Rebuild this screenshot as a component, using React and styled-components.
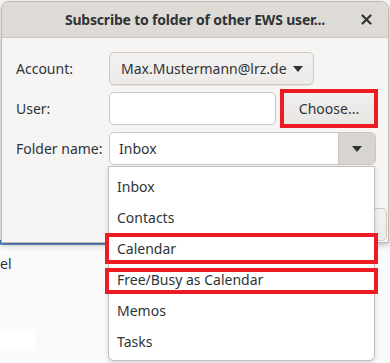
import styled, { createGlobalStyle } from "styled-components";

const GlobalStyle = createGlobalStyle`
  html, body {
    margin: 0;
    padding: 0;
    background: #fafafa;
  }
  body {
    font-family: "Noto Sans", "Open Sans", sans-serif;
    color: #2e3436;
  }
`;

const Screen = styled.div`
  position: relative;
  width: 390px;
  height: 363px;
  overflow: hidden;
  background: #fafafa;
`;

// what shows of the main window behind the dialog
const Backdrop = styled.div`
  display: flex;
  flex-direction: column;
  padding-top: 240px;
`;

const BlueBand = styled.div`
  width: 120px;
  height: 5px;
  background: linear-gradient(#2a5fa8, #6d93c6);
`;

const BackLabel = styled.div`
  margin-top: 10px;
  font-size: 14px;
  color: #2e3436;
  line-height: 18px;
`;

const BackField = styled.div`
  margin-top: 56px;
  width: 36px;
  height: 22px;
  background: #ffffff;
`;

const Dialog = styled.div`
  position: absolute;
  left: 1px;
  top: 1px;
  width: 386px;
  height: 240px;
  display: flex;
  flex-direction: column;
  background: #f6f5f4;
  border: 1px solid #bdb8b3;
  border-radius: 8px 8px 0 0;
  box-shadow: 0 2px 6px rgba(0, 0, 0, 0.25);
`;

const TitleBar = styled.div`
  position: relative;
  height: 35px;
  display: flex;
  align-items: center;
  justify-content: center;
  background: #dedbd7;
  border-bottom: 1px solid #cfc9c4;
  border-radius: 7px 7px 0 0;
`;

const Title = styled.span`
  font-weight: 700;
  font-size: 14px;
  color: #2e3436;
  letter-spacing: -0.2px;
`;

const CloseButton = styled.span`
  position: absolute;
  right: 14px;
  top: 9px;
  width: 16px;
  height: 16px;
  display: flex;
  align-items: center;
  justify-content: center;
`;

const Form = styled.div`
  display: grid;
  grid-template-columns: 93px 1fr;
  row-gap: 7px;
  padding: 14px 10px 0 14px;
  align-items: center;
`;

const Label = styled.label`
  font-size: 14px;
  color: #2e3436;
`;

const FieldRow = styled.div`
  display: flex;
  align-items: center;
  height: 33px;
`;

const ComboButton = styled.div`
  height: 31px;
  display: inline-flex;
  align-items: center;
  gap: 6px;
  padding: 0 10px 0 11px;
  border: 1px solid #cdc7c2;
  border-radius: 5px;
  background: linear-gradient(#f4f2f1, #edebe9);
  box-shadow: 0 1px 0 rgba(0, 0, 0, 0.07);
  font-size: 14px;
  color: #2e3436;
`;

const Entry = styled.div`
  width: 165px;
  height: 31px;
  border: 1px solid #cdc7c2;
  border-radius: 5px;
  background: #ffffff;
`;

const ChooseButton = styled.button`
  width: 98px;
  height: 39px;
  margin: -3px 0 -3px 4px;
  border: 4px solid #ed1c24;
  background: linear-gradient(#f1efee, #e8e6e3);
  font-family: "Noto Sans", "Open Sans", sans-serif;
  font-size: 14px;
  color: #2e3436;
  padding: 0;
`;

const FolderCombo = styled.div`
  width: 265px;
  height: 31px;
  display: flex;
  border: 1px solid #cdc7c2;
  border-radius: 5px;
  overflow: hidden;
  background: #ffffff;
`;

const FolderText = styled.div`
  flex: 1;
  display: flex;
  align-items: center;
  padding-left: 9px;
  font-size: 14px;
  color: #2e3436;
`;

const FolderArrow = styled.div`
  width: 36px;
  display: flex;
  align-items: center;
  justify-content: center;
  background: #d8d4d0;
  border-left: 1px solid #cdc7c2;
`;

const ButtonBar = styled.div`
  margin-top: auto;
  display: flex;
  justify-content: flex-end;
  padding: 0 1px 1px 0;
`;

const OkButton = styled.div`
  width: 80px;
  height: 31px;
  border: 1px solid #cdc7c2;
  border-radius: 5px;
  background: linear-gradient(#f4f2f1, #edebe9);
`;

const Popup = styled.ul`
  position: absolute;
  left: 108px;
  top: 166px;
  width: 265px;
  margin: 0;
  padding: 4px 0 3px;
  list-style: none;
  background: #ffffff;
  border: 1px solid #c4bfba;
  border-radius: 0 0 6px 6px;
  box-shadow: 0 2px 5px rgba(0, 0, 0, 0.15);
`;

const MenuItem = styled.li`
  position: relative;
  height: 31px;
  display: flex;
  align-items: center;
  padding-left: 8px;
  font-size: 14px;
  color: #2e3436;

  ${(p) =>
    p.$marked &&
    `
    &::after {
      content: "";
      position: absolute;
      left: -4px;
      right: -4px;
      top: ${p.$markTop}px;
      bottom: ${p.$markBottom}px;
      border: 4px solid #ed1c24;
    }
  `}
`;

const Triangle = ({ size = 10 }) => (
  <svg width={size} height={size * 0.6} viewBox="0 0 10 6">
    <path d="M0 0 L10 0 L5 6 Z" fill="#2e3436" />
  </svg>
);

const folders = [
  { name: "Inbox" },
  { name: "Contacts" },
  { name: "Calendar", marked: true, markTop: 0, markBottom: 0 },
  { name: "Free/Busy as Calendar", marked: true, markTop: 4, markBottom: 1 },
  { name: "Memos" },
  { name: "Tasks" },
];

export default function App() {
  return (
    <Screen>
      <GlobalStyle />
      <Backdrop>
        <BlueBand />
        <BackLabel>el</BackLabel>
        <BackField />
      </Backdrop>

      <Dialog>
        <TitleBar>
          <Title>Subscribe to folder of other EWS user...</Title>
          <CloseButton>
            <svg width="11" height="11" viewBox="0 0 11 11">
              <path
                d="M1.5 1.5 L9.5 9.5 M9.5 1.5 L1.5 9.5"
                stroke="#2e3436"
                strokeWidth="2.2"
                strokeLinecap="round"
              />
            </svg>
          </CloseButton>
        </TitleBar>

        <Form>
          <Label>Account:</Label>
          <FieldRow>
            <ComboButton>
              Max.Mustermann@lrz.de
              <Triangle />
            </ComboButton>
          </FieldRow>

          <Label>User:</Label>
          <FieldRow>
            <Entry />
            <ChooseButton>Choose...</ChooseButton>
          </FieldRow>

          <Label>Folder name:</Label>
          <FieldRow>
            <FolderCombo>
              <FolderText>Inbox</FolderText>
              <FolderArrow>
                <Triangle />
              </FolderArrow>
            </FolderCombo>
          </FieldRow>
        </Form>

        <ButtonBar>
          <OkButton />
        </ButtonBar>
      </Dialog>

      <Popup>
        {folders.map((f) => (
          <MenuItem
            key={f.name}
            $marked={f.marked}
            $markTop={f.markTop}
            $markBottom={f.markBottom}
          >
            {f.name}
          </MenuItem>
        ))}
      </Popup>
    </Screen>
  );
}
